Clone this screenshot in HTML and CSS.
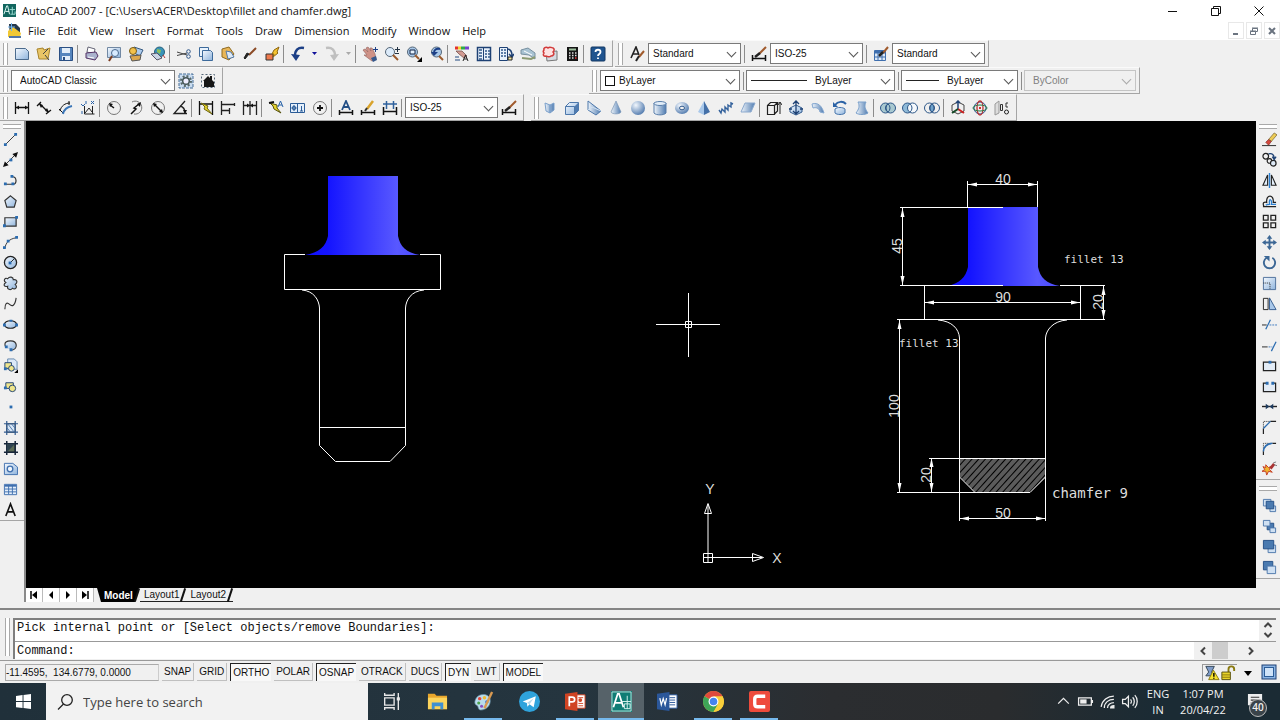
FILE: index.html
```html
<!DOCTYPE html>
<html lang="en">
<head>
<meta charset="utf-8">
<title>AutoCAD 2007 - [C:\Users\ACER\Desktop\fillet and chamfer.dwg]</title>
<link rel="stylesheet" href="styles.css">
</head>
<body>
<svg class="defs" aria-hidden="true">
  <defs>
    <linearGradient id="sky" x1="0" y1="0" x2="1" y2="1"><stop offset="0" stop-color="#f4f9ff"/><stop offset="1" stop-color="#8fb4dc"/></linearGradient>
    <linearGradient id="steel" x1="0" y1="0" x2="1" y2="0"><stop offset="0" stop-color="#f0f6fc"/><stop offset="1" stop-color="#4f7bb0"/></linearGradient>
    <radialGradient id="ball" cx=".35" cy=".3" r=".8"><stop offset="0" stop-color="#f2f7fd"/><stop offset="1" stop-color="#4571a8"/></radialGradient>
    <linearGradient id="shaft" x1="0" y1="0" x2="1" y2="0"><stop offset="0" stop-color="#1010ff"/><stop offset=".2" stop-color="#1414ff"/><stop offset=".8" stop-color="#5858ff"/><stop offset="1" stop-color="#4a4aff"/></linearGradient>
    <pattern id="hatch" width="5" height="5" patternUnits="userSpaceOnUse" patternTransform="rotate(42)"><path d="M1 0V5M3 0V5" stroke="#e4e4e4" stroke-width=".8"/></pattern>
  </defs>
</svg>

<header class="titlebar">
  <svg class="app-logo" viewBox="0 0 14 14"><rect width="14" height="14" fill="#12665f"/><path d="M1 11L4 2h1l2 9M2.500 8h4" stroke="#e6fffa" fill="none"/><path d="M7 6h6M10 3v8M8 11h5v-3" stroke="#9fe0d5" fill="none"/></svg>
  <h1>AutoCAD 2007 - [C:\Users\ACER\Desktop\fillet and chamfer.dwg]</h1>
  <div class="window-controls">
    <button aria-label="Minimize"><svg viewBox="0 0 12 12"><path d="M1 6.500h9"/></svg></button>
    <button aria-label="Restore"><svg viewBox="0 0 12 12"><path d="M1.500 3.500h7v7h-7zM3.500 3.500v-2h7v7h-2"/></svg></button>
    <button aria-label="Close"><svg viewBox="0 0 12 12"><path d="M1.500 1.500l9 9M10.500 1.500l-9 9"/></svg></button>
  </div>
</header>

<nav class="menubar">
  <svg class="doc-logo" viewBox="0 0 15 15"><path d="M2 1h7l4 4v8H3z" fill="#26384a"/><path d="M1 8l5-4 8 6-1 4H1z" fill="#f1c834"/><path d="M4.500 0v8M1 4h7" stroke="#6fb1ec"/><path d="M2 14h12" stroke="#5175a5" stroke-width="2"/></svg>
  <button>File</button><button>Edit</button><button>View</button><button>Insert</button><button>Format</button><button>Tools</button><button>Draw</button><button>Dimension</button><button>Modify</button><button>Window</button><button>Help</button>
  <div class="doc-controls">
    <button aria-label="Minimize drawing"><svg viewBox="0 0 10 10"><path d="M2 8h5" stroke-width="2"/></svg></button>
    <button aria-label="Restore drawing"><svg viewBox="0 0 10 10"><path d="M1.500 5.500h5v3h-5zM3.500 5V2.500h5v3h-2M1 5h6M3 2h6"/></svg></button>
    <button aria-label="Close drawing"><svg viewBox="0 0 10 10"><path d="M2 2l6 6M8 2l-6 6" stroke-width="2"/></svg></button>
  </div>
</nav>

<section class="docks">
  <div class="dock-row">
    <div class="toolbar">
      <i class="grip"></i>
      <button aria-label="New"><svg viewBox="0 0 16 16"><path d="M1.500 2.500h10l3 3v8h-13z" fill="url(#sky)" stroke="#4b6a8c"/></svg></button>
      <button aria-label="Open"><svg viewBox="0 0 16 16"><path d="M1 3l6-1 1 2 6-2-2 11H3z" fill="#e9c566" stroke="#a8842c"/><path d="M7 8l5-5M9 9l4 5" stroke="#444"/></svg></button>
      <button aria-label="Save"><svg viewBox="0 0 16 16"><path d="M1.500 1.500h13v13h-13z" fill="#5685bd" stroke="#2a4f83"/><path d="M4 2h8v5H4zM4 10h8v4H4z" fill="#e2edf8" stroke="none"/><path d="M6 11v3" stroke="#2a4f83" stroke-width="2"/></svg></button>
      <i class="sep"></i>
      <button aria-label="Plot"><svg viewBox="0 0 16 16"><path d="M4 1l7 2-1 5-7-2z" fill="#fff" stroke="#667"/><path d="M2 7l10-1 2 4-3 4-9-2z" fill="#aab2cd" stroke="#536"/><path d="M4 11l6 1" stroke="#fff"/></svg></button>
      <button aria-label="Plot Preview"><svg viewBox="0 0 16 16"><path d="M1.500 1.500h13v10h-13z" fill="url(#sky)" stroke="#7188a3"/><circle cx="9" cy="7" r="3.500" fill="#d8ebff" stroke="#4c6a8e"/><path d="M6 10l-3 5" stroke="#7b3c20" stroke-width="2"/></svg></button>
      <button aria-label="Publish"><svg viewBox="0 0 16 16"><path d="M6 1l9 3-3 6-8-4z" fill="#aecbec" stroke="#34587f"/><circle cx="5" cy="5" r="3.500" fill="#f2c14b" stroke="#795a12"/><path d="M2 10l11-1-1 5-8 1z" fill="#dca74d" stroke="#555"/></svg></button>
      <button aria-label="3D DWF"><svg viewBox="0 0 16 16"><circle cx="9.500" cy="6" r="5" fill="#3a93b8" stroke="#28607c"/><path d="M7 3l4 1-1 4-3-2z" fill="#8fc15a" stroke="none"/><path d="M1 8l6-1 5 5-5 2z" fill="#c9d4e4" stroke="#556"/><path d="M13 9l2 3" stroke="#b33"/></svg></button>
      <i class="sep"></i>
      <button aria-label="Cut"><svg viewBox="0 0 16 16"><path d="M1 6l10 3M1 9.500L11 7" stroke="#444"/><circle cx="12.500" cy="5.500" r="1.800" stroke="#31588a"/><circle cx="12.500" cy="10.500" r="1.800" stroke="#31588a"/></svg></button>
      <button aria-label="Copy"><svg viewBox="0 0 16 16"><path d="M1.500 1.500h9v9h-9z" fill="#e9f3fd" stroke="#3d6a9b"/><path d="M4.500 4.500h8l2 2v8h-10z" fill="url(#sky)" stroke="#3d6a9b"/></svg></button>
      <button aria-label="Paste"><svg viewBox="0 0 16 16"><path d="M2 3l7-2 5 7-5 6-7-3z" fill="#e8b657" stroke="#8f6a21"/><path d="M6 5l5 1 3 5-6 2z" fill="#dbe9f8" stroke="#5478a3"/></svg></button>
      <button aria-label="Match Properties"><svg viewBox="0 0 16 16"><path d="M14 2L7 9" stroke="#8b4a25" stroke-width="2"/><path d="M7 8L3 13l-1-1 3-5z" fill="#222" stroke="#222"/></svg></button>
      <button aria-label="Block Editor"><svg viewBox="0 0 16 16"><path d="M2 8h7v6H2z" fill="#ef7a4d" stroke="#333"/><path d="M8 8l2-4 5-3-2 5 1 1-5 4 1-3z" fill="#f5c431" stroke="#8d6510"/></svg></button>
      <i class="sep"></i>
      <button aria-label="Undo"><svg viewBox="0 0 16 16"><path d="M14 2C8 1 5 4 5 10" stroke="#1c3f86" stroke-width="2.500"/><path d="M1 8l9 1-4 6z" fill="#1c3f86" stroke="none"/></svg></button>
      <button class="drop" aria-label="Undo list"><svg viewBox="0 0 8 8"><path d="M1 2h5L3.500 5z" fill="#10109a" stroke="none"/></svg></button>
      <button aria-label="Redo"><svg viewBox="0 0 16 16"><path d="M2 2c6-1 9 2 9 8" stroke="#bfbfbf" stroke-width="2.500"/><path d="M15 8l-9 1 4 6z" fill="#bfbfbf" stroke="none"/></svg></button>
      <button class="drop" aria-label="Redo list"><svg viewBox="0 0 8 8"><path d="M1 2h5L3.500 5z" fill="#aaa" stroke="none"/></svg></button>
      <i class="sep"></i>
      <button aria-label="Pan"><svg viewBox="0 0 16 16"><path d="M1 4l2-1 3 3-2-4 2-1 3 4-1-3 2 0 3 6 1 5-4 2-4-3-4-3 3 0z" fill="#cf9287" stroke="#9b6a64" stroke-width=".7"/><path d="M9 12l5-2 1 4-4 2z" fill="#36598d" stroke="none"/><path d="M13.500 1v5M11 3.500h5" stroke="#1c3f86"/></svg></button>
      <button aria-label="Zoom Realtime"><svg viewBox="0 0 16 16"><circle cx="6" cy="6" r="4.500" fill="#dcebfa" stroke="#567"/><path d="M9 9l5 5" stroke="#9a5a2d" stroke-width="2"/><path d="M13.500 1v5M11 3.500h5M11 7.500h4" stroke="#234"/></svg></button>
      <button aria-label="Zoom Window"><svg viewBox="0 0 16 16"><circle cx="6.500" cy="6" r="5" fill="#a9c8e8" stroke="#567"/><path d="M4 4h5v4H4z" stroke="#124" fill="#e5f1fd"/><path d="M9 9l4 4" stroke="#9a5a2d" stroke-width="2"/><path d="M16 11v5h-5z" fill="#000" stroke="none"/></svg></button>
      <button aria-label="Zoom Previous"><svg viewBox="0 0 16 16"><circle cx="8.500" cy="6" r="5" fill="#a9c8e8" stroke="#567"/><path d="M12 3C8 2 6 4 6 7" stroke="#1c3f86" stroke-width="2"/><path d="M3 6h7l-4 4z" fill="#1c3f86" stroke="none"/><path d="M11 10l4 4" stroke="#9a5a2d" stroke-width="2"/></svg></button>
      <i class="sep"></i>
      <button aria-label="Properties"><svg viewBox="0 0 16 16"><path d="M1 2h3" stroke="#e4312b" stroke-width="3"/><path d="M4 2h3" stroke="#f3d131" stroke-width="3"/><path d="M7 2h4" stroke="#2fab47" stroke-width="3"/><path d="M11 2h4" stroke="#7442cf" stroke-width="3"/><path d="M2 5l6 0 5 5-3 2-5-4z" fill="#d29a91" stroke="#6b4541" stroke-width=".7"/><path d="M1 11h4M1 14h5" stroke="#234a80"/><path d="M9 15l2.500-6L14 15M10 13h3" stroke="#222"/></svg></button>
      <button aria-label="DesignCenter"><svg viewBox="0 0 16 16"><path d="M1.500 1.500h13v13h-13z" fill="#e8f1fb" stroke="#1e4174" stroke-width="1.500"/><path d="M7.500 2v12" stroke="#1e4174"/><path d="M3 4h3M3 7h3M3 10h3M3 13h3M9 5h2M12 5h2M9 8h2M12 8h2M9 11h2M12 11h2" stroke="#31588a" stroke-width="1.600"/></svg></button>
      <button aria-label="Tool Palettes"><svg viewBox="0 0 16 16"><path d="M1.500 1.500h8v13h-8z" fill="#e8f1fb" stroke="#1e4174"/><path d="M3 4h2M6 4h2M3 7h2M6 7h2M3 10h2M6 10h2" stroke="#31588a" stroke-width="1.500"/><path d="M9 3c4 0 5 3 5 7M11 8l3 3 2-3" stroke="#1e4174" stroke-width="1.500"/><path d="M10 11h4v3h-4z" fill="#f2e5a0"/></svg></button>
      <button aria-label="Sheet Set Manager"><svg viewBox="0 0 16 16"><path d="M1 4l7-2 7 5v6l-6-4-8-1z" fill="#a9c3d3" stroke="#7890a0"/><path d="M2 12l9 1 4-2" stroke="#8c9a72" stroke-width="2"/><path d="M4 5l8 4" stroke="#fff"/></svg></button>
      <button aria-label="Markup Set Manager"><svg viewBox="0 0 16 16"><path d="M4 6l11-1v9l-10 1z" fill="#d5dbe2" stroke="#777"/><path d="M2 4c-1-3 3-3 4-2 2-2 4 0 5 0 2 1 1 3 0 4 2 2 0 4-2 4-2 2-4 0-5 0-3 1-3-2-2-3-1-1-1-2 0-3z" fill="#fde2e2" stroke="#d23a3a" stroke-width="1.500"/></svg></button>
      <button aria-label="QuickCalc"><svg viewBox="0 0 16 16"><path d="M3 1h11v14H3z" fill="#151515" stroke="none"/><path d="M5 3.500h7" stroke="#9cbf9c" stroke-width="2"/><path d="M5 7h1.500M8 7h1.500M11 7h1.500M5 9.500h1.500M8 9.500h1.500M11 9.500h1.500M5 12h1.500M8 12h1.500" stroke="#ddd" stroke-width="1.500"/><path d="M11 12h1.500" stroke="#e33" stroke-width="1.500"/></svg></button>
      <i class="sep"></i>
      <button aria-label="Help"><svg viewBox="0 0 16 16"><rect x="1" y="1" width="14" height="14" rx="1" fill="#1f548f" stroke="#123763"/><path d="M5.500 6c0-3 5-3 5 0 0 2-2.500 2-2.500 4M8 11.500v1.500" stroke="#fff" stroke-width="1.800"/></svg></button>
    </div>
    <div class="toolbar">
      <i class="grip"></i>
      <button aria-label="Text Style"><svg viewBox="0 0 16 16"><path d="M2 12L7 1l3 8M4 8h5" stroke="#222" stroke-width="1.600"/><path d="M15 5l-5 6" stroke="#a05a2c" stroke-width="2"/><path d="M10 10l-3 5" stroke="#222" stroke-width="2"/></svg></button>
      <div class="combo w92"><select aria-label="Text style"><option>Standard</option></select></div>
      <i class="sep"></i>
      <button aria-label="Dimension Style"><svg viewBox="0 0 16 16"><path d="M1.500 9v6M14.500 9v6M2 12.500h12" stroke="#111" stroke-width="1.500"/><path d="M15 1L8 8" stroke="#a05a2c" stroke-width="2"/><path d="M9 7l-5 4" stroke="#222" stroke-width="2.500"/></svg></button>
      <div class="combo w92"><select aria-label="Dimension style"><option>ISO-25</option></select></div>
      <i class="sep"></i>
      <button aria-label="Table Style"><svg viewBox="0 0 16 16"><path d="M1.500 4.500h11v10h-11z" fill="#dce9f8" stroke="#3f6fae"/><path d="M2 6h10" stroke="#3f6fae" stroke-width="3"/><path d="M5 5v9M9 5v9M2 11h10" stroke="#3f6fae"/><path d="M15 1l-5 6" stroke="#a05a2c" stroke-width="2"/><path d="M10 6l-4 4" stroke="#222" stroke-width="2.500"/></svg></button>
      <div class="combo w92"><select aria-label="Table style"><option>Standard</option></select></div>
    </div>
  </div>

  <div class="dock-row">
    <div class="toolbar workspaces">
      <i class="grip"></i>
      <div class="combo w163"><select aria-label="Workspace"><option>AutoCAD Classic</option></select></div>
      <button aria-label="Workspace Settings"><svg viewBox="0 0 16 16"><path d="M1 1h14v14H1z" stroke="#456c96" stroke-dasharray="3 1" fill="#c9dcf0"/><circle cx="8" cy="8" r="5" stroke="#566" stroke-width="2" stroke-dasharray="2 1.900"/><circle cx="8" cy="8" r="3.300" fill="#eef" stroke="#455" stroke-width="1.500"/></svg></button>
      <button aria-label="My Workspace"><svg viewBox="0 0 16 16"><path d="M1.500 1.500h13v13h-13z" stroke="#567" stroke-dasharray="2 2"/><path d="M3 8l5-5 2 2V3h2v4l2 2v5H4V8z" fill="#161616" stroke="none"/></svg></button>
    </div>
    <div class="toolbar properties">
      <i class="grip"></i>
      <div class="combo w140"><i class="swatch"></i><select aria-label="Color"><option>ByLayer</option></select></div>
      <i class="sep"></i>
      <div class="combo w149"><i class="line w56"></i><select aria-label="Linetype"><option>ByLayer</option></select></div>
      <i class="sep"></i>
      <div class="combo w117"><i class="line w33"></i><select aria-label="Lineweight"><option>ByLayer</option></select></div>
      <i class="sep"></i>
      <div class="combo w112 off"><select aria-label="Plot style" disabled><option>ByColor</option></select></div>
    </div>
  </div>

  <div class="dock-row">
    <div class="toolbar">
      <i class="grip"></i>
      <button aria-label="Linear"><svg viewBox="0 0 16 16"><path d="M1.500 2v12M14.500 2v12M2 7.500h12" stroke="#111" stroke-width="1.300"/><path d="M2 7.500l3-2v4zM14 7.500l-3-2v4z" fill="#111" stroke="none"/></svg></button>
      <button aria-label="Aligned"><svg viewBox="0 0 16 16"><path d="M1 6l4-4M10 14l5-4M4 4l8 8" stroke="#111" stroke-width="1.300"/><path d="M3 4l4 1-2 3zM13 12l-4-1 2-3z" fill="#111" stroke="none"/></svg></button>
      <button aria-label="Arc Length"><svg viewBox="0 0 16 16"><path d="M2 11C3 6 7 3 12 3M1 9l4 4M11 1v4" stroke="#111"/><path d="M5 14c1-5 4-7 9-8" stroke="#3b76b8" stroke-width="2"/></svg></button>
      <button aria-label="Ordinate"><svg viewBox="0 0 16 16"><path d="M4.500 6v8h10M5 13l4-5 3 4" stroke="#222"/><path d="M12.500 6v8" stroke="#222"/><path d="M1 4l2 2 2-2M11 1l3 3M14 1l-3 3M2 11v3M6 1v3" stroke="#2962a8"/></svg></button>
      <i class="sep"></i>
      <button aria-label="Radius"><svg viewBox="0 0 16 16"><circle cx="8" cy="8" r="6.500" stroke="#777"/><path d="M8 8L4 5" stroke="#111" stroke-width="1.500"/><path d="M3 3l4 1-3 3z" fill="#111" stroke="none"/></svg></button>
      <button aria-label="Jogged"><svg viewBox="0 0 16 16"><path d="M4 2a6.500 6.500 0 1 1 2 12" stroke="#777"/><path d="M3 14l5-5-2-1 5-4" stroke="#111" stroke-width="1.500"/><path d="M13 2l-1 5-3-3z" fill="#111" stroke="none"/></svg></button>
      <button aria-label="Diameter"><svg viewBox="0 0 16 16"><circle cx="8" cy="8" r="6.500" stroke="#777"/><path d="M4 4l8 8" stroke="#111" stroke-width="1.500"/><path d="M3 3l4 1-3 3zM13 13l-4-1 3-3z" fill="#111" stroke="none"/></svg></button>
      <button aria-label="Angular"><svg viewBox="0 0 16 16"><path d="M13 1L2 13.500h13M8 6c4 1 5 4 5 7" stroke="#222" stroke-width="1.300"/><path d="M13 14l-2-4h4z" fill="#111" stroke="none"/></svg></button>
      <i class="sep"></i>
      <button aria-label="Quick Dimension"><svg viewBox="0 0 16 16"><path d="M1.500 1v14M14.500 1v14M2 4h12" stroke="#111" stroke-width="1.300"/><path d="M3 3l7 3-1 2 5 6-8-5 1-2z" fill="#e7d62f" stroke="#6d6410"/></svg></button>
      <button aria-label="Baseline"><svg viewBox="0 0 16 16"><path d="M1.500 1v14M2 4.500h13M2 10.500h7M14.500 3v3M9.500 8v6" stroke="#222" stroke-width="1.300"/></svg></button>
      <button aria-label="Continue"><svg viewBox="0 0 16 16"><path d="M1.500 1v14M8 1v14M14.500 1v14M2 5.500h12" stroke="#222" stroke-width="1.300"/><path d="M8 5.500l-3-2v4zM8 5.500l3-2v4z" fill="#111" stroke="none"/></svg></button>
      <i class="sep"></i>
      <button aria-label="Quick Leader"><svg viewBox="0 0 16 16"><path d="M2 3l7 2 0 3 4 5-7-4-1-3z" fill="#e7d62f" stroke="#55500f"/><path d="M1 3l5-1" stroke="#111" stroke-width="2"/><path d="M10 7l2.500-6L15 7M11 5h3" stroke="#2962a8"/></svg></button>
      <button aria-label="Tolerance"><svg viewBox="0 0 16 16"><path d="M.5 3.500h14v9H.5z" fill="#e4effb" stroke="#2b5c97"/><path d="M7.500 4v8" stroke="#2b5c97"/><circle cx="4" cy="8" r="1.800" stroke="#2b5c97"/><path d="M1.500 8h5M4 5v6M11.500 6v5M10 11h3" stroke="#2b5c97"/></svg></button>
      <button aria-label="Center Mark"><svg viewBox="0 0 16 16"><circle cx="8" cy="8" r="6.500" stroke="#777"/><path d="M8 5v6M5 8h6" stroke="#111" stroke-width="1.800"/></svg></button>
      <i class="sep"></i>
      <button aria-label="Dimension Edit"><svg viewBox="0 0 16 16"><path d="M1.500 10v5M14.500 10v5M2 12.500h12" stroke="#111" stroke-width="1.500"/><path d="M4 10l4-9 4 9M5.500 7h5" stroke="#234f86" stroke-width="1.800"/></svg></button>
      <button aria-label="Dimension Text Edit"><svg viewBox="0 0 16 16"><path d="M1.500 10v5M14.500 10v5M2 12.500h12" stroke="#111" stroke-width="1.500"/><path d="M13 1L7 9" stroke="#d9a32c" stroke-width="2.500"/><path d="M7 8l-2 3" stroke="#333" stroke-width="2"/></svg></button>
      <button aria-label="Dimension Update"><svg viewBox="0 0 16 16"><path d="M1.500 7v8M14.500 7v8M2 11.500h12" stroke="#111" stroke-width="1.500"/><path d="M4.500 1v8M11.500 1v8M1 4h14" stroke="#2f619d" stroke-width="1.500"/></svg></button>
      <i class="sep"></i>
      <div class="combo w92"><select aria-label="Dim style control"><option>ISO-25</option></select></div>
      <button aria-label="Dimension Style"><svg viewBox="0 0 16 16"><path d="M1.500 9v6M14.500 9v6M2 12.500h12" stroke="#111" stroke-width="1.500"/><path d="M15 1L8 8" stroke="#a05a2c" stroke-width="2"/><path d="M9 7l-5 4" stroke="#222" stroke-width="2.500"/></svg></button>
    </div>
    <div class="toolbar modeling">
      <i class="grip"></i>
      <button aria-label="Polysolid"><svg viewBox="0 0 16 16"><path d="M3 3l5 2v8l-4-2zM8 5l4-2v7l-4 3z" fill="url(#steel)" stroke="#7ba0cb"/></svg></button>
      <button aria-label="Box"><svg viewBox="0 0 16 16"><path d="M1.500 6.500l4-4h9v8l-4 4h-9z" fill="url(#sky)" stroke="#4d78ab"/><path d="M10.500 6.500l4-4v8l-4 4z" fill="#4f7bb0" stroke="none"/><path d="M1.500 6.500h9v8" stroke="#4d78ab"/></svg></button>
      <button aria-label="Wedge"><svg viewBox="0 0 16 16"><path d="M2 1v9l8 5 5-4z" fill="url(#steel)" stroke="#4d78ab"/><path d="M2 10l4-3 9 4" stroke="#cfe0f2"/></svg></button>
      <button aria-label="Cone"><svg viewBox="0 0 16 16"><path d="M8 1l5 11c-1 2.500-9 2.500-10 0z" fill="url(#steel)" stroke="#7d98b8" stroke-width=".7"/></svg></button>
      <button aria-label="Sphere"><svg viewBox="0 0 16 16"><circle cx="8" cy="8" r="7" fill="url(#ball)" stroke="none"/></svg></button>
      <button aria-label="Cylinder"><svg viewBox="0 0 16 16"><path d="M2 3v10c2 2.500 10 2.500 12 0V3z" fill="url(#steel)" stroke="#5a7fab"/><ellipse cx="8" cy="3.500" rx="6" ry="2" fill="#e2edf8" stroke="#5a7fab"/></svg></button>
      <button aria-label="Torus"><svg viewBox="0 0 16 16"><ellipse cx="8" cy="8" rx="7" ry="6" fill="url(#ball)" stroke="none"/><ellipse cx="8" cy="8" rx="2.500" ry="1.800" fill="#f0f0f0" stroke="#345c8f"/></svg></button>
      <button aria-label="Pyramid"><svg viewBox="0 0 16 16"><path d="M8 1L2 12l6 3z" fill="#a9c8ea" stroke="none"/><path d="M8 1l6 11-6 3z" fill="#4470a8" stroke="none"/></svg></button>
      <button aria-label="Helix"><svg viewBox="0 0 16 16"><path d="M1 10l2 3 1-4 3 3V7l3 3V5l3 2 0-4 2 1" stroke="#34629c" stroke-width="1.400"/></svg></button>
      <button aria-label="Planar Surface"><svg viewBox="0 0 16 16"><path d="M5 3h10l-4 9H1z" fill="url(#steel)" stroke="#8ba9ce"/></svg></button>
      <i class="sep"></i>
      <button aria-label="Extrude"><svg viewBox="0 0 16 16"><path d="M1.500 5.500h7v9h-7zM1.500 5.500l3-3h7l-3 3M11.500 3v8l-3 3" stroke="#222" stroke-width="1.200"/><path d="M14 14V3M12 5l2-3 2 3" stroke="#222"/></svg></button>
      <button aria-label="Presspull"><svg viewBox="0 0 16 16"><path d="M2 8l6-3 6 3v4l-6 3-6-3z" fill="url(#sky)" stroke="#345c8f"/><path d="M8 1v12M5 4l3-3 3 3M1 9h3M12 9h3M5 11l3 3 3-3" stroke="#1e4174" stroke-width="1.300"/></svg></button>
      <button aria-label="Sweep"><svg viewBox="0 0 16 16"><path d="M2 4c6-2 10 2 12 9l-4-1C9 8 6 7 3 8z" fill="url(#steel)" stroke="#84a7d0"/></svg></button>
      <button aria-label="Revolve"><svg viewBox="0 0 16 16"><path d="M3 9c2-2 8-2 10 0v4c-2 2-8 2-10 0z" fill="url(#sky)" stroke="#4674ab"/><path d="M3 5c3-4 8-4 11-1" stroke="#2b62a5" stroke-width="2"/><path d="M1 2v5h5z" fill="#2b62a5" stroke="none"/></svg></button>
      <button aria-label="Loft"><svg viewBox="0 0 16 16"><path d="M4 2h8c-2 4-1 7 2 11-3 2-9 2-12 0 3-4 4-7 2-11z" fill="url(#steel)" stroke="#7aa0cb"/></svg></button>
      <i class="sep"></i>
      <button aria-label="Union"><svg viewBox="0 0 16 16"><circle cx="5.500" cy="8" r="5" fill="#a8c8d0" stroke="#2d5788"/><circle cx="10.500" cy="8" r="5" fill="#a8c8d0" stroke="#2d5788"/><path d="M8 4a5 5 0 0 0 0 8a5 5 0 0 0 0-8" stroke="#2d5788"/></svg></button>
      <button aria-label="Subtract"><svg viewBox="0 0 16 16"><circle cx="5.500" cy="8" r="5" fill="#8fbad8" stroke="#2d5788"/><circle cx="10.500" cy="8" r="5" fill="#f4f8fc" stroke="#2d5788"/><path d="M8 4a5 5 0 0 1 0 8" stroke="#2d5788"/></svg></button>
      <button aria-label="Intersect"><svg viewBox="0 0 16 16"><circle cx="5.500" cy="8" r="5" stroke="#2d5788"/><circle cx="10.500" cy="8" r="5" stroke="#2d5788"/><path d="M8 4a5 5 0 0 0 0 8a5 5 0 0 0 0-8" fill="#6fa3cc" stroke="#2d5788"/></svg></button>
      <i class="sep"></i>
      <button aria-label="3D Move"><svg viewBox="0 0 16 16"><path d="M8 2l6 3v6l-6 3-6-3V5z" stroke="#444"/><path d="M8 9V1M6 3l2-2 2 2" stroke="#1e4174" stroke-width="1.500"/><path d="M8 9l6 4" stroke="#c22" stroke-width="2"/><path d="M8 9l-6 4" stroke="#164a28" stroke-width="2"/></svg></button>
      <button aria-label="3D Rotate"><svg viewBox="0 0 16 16"><circle cx="8" cy="8" r="6" stroke="#2a4f90"/><ellipse cx="8" cy="8" rx="3" ry="7" stroke="#b33" stroke-width="1.300"/><ellipse cx="8" cy="8" rx="7" ry="3" stroke="#257a45"/><path d="M7 7h2v2H7z" fill="#c33" stroke="none"/></svg></button>
      <button aria-label="3D Align"><svg viewBox="0 0 16 16"><path d="M1 4l4-3v12l-4 2z" fill="#ddd" stroke="#999"/><path d="M6.500 4.500h2v6h-2zM12 3v4h2M14 3h-2" stroke="#333"/><circle cx="12.500" cy="12" r="2" stroke="#222"/></svg></button>
    </div>
  </div>
</section>

<main class="workspace">
  <aside class="side">
    <div class="palette draw">
      <i class="hgrip"></i>
      <button aria-label="Line"><svg viewBox="0 0 16 16"><path d="M2 14L14 2" stroke="#333"/><path d="M1 12h3v3H1zM12 1h3v3h-3z" fill="#2b6cb0" stroke="none"/></svg></button>
      <button aria-label="Construction Line"><svg viewBox="0 0 16 16"><path d="M2 14L14 2" stroke="#333"/><path d="M0 16l2-6 4 4zM16 0l-2 6-4-4z" fill="#111" stroke="none"/><path d="M7 7h3v3H7z" fill="#2b6cb0" stroke="none"/></svg></button>
      <button aria-label="Polyline"><svg viewBox="0 0 16 16"><path d="M2 12h9c4 0 4-8-1-8" stroke="#333" stroke-width="1.300"/><path d="M1 10h3v3H1zM9 10h3v3H9zM8 2h3v3H8z" fill="#2b6cb0" stroke="none"/></svg></button>
      <button aria-label="Polygon"><svg viewBox="0 0 16 16"><path d="M8 2l6 5-2 7H4L2 7z" fill="url(#sky)" stroke="#333" stroke-width="1.300"/></svg></button>
      <button aria-label="Rectangle"><svg viewBox="0 0 16 16"><path d="M2 4h12v9H2z" fill="url(#sky)" stroke="#333" stroke-width="1.300"/><path d="M0 11h3v3H0zM13 2h3v3h-3z" fill="#2b6cb0" stroke="none"/></svg></button>
      <button aria-label="Arc"><svg viewBox="0 0 16 16"><path d="M2 14C3 8 7 4 14 3" stroke="#333"/><path d="M0 12h3v3H0zM4 5h3v3H4zM13 1h3v3h-3z" fill="#2b6cb0" stroke="none"/></svg></button>
      <button aria-label="Circle"><svg viewBox="0 0 16 16"><circle cx="8" cy="8" r="6.500" fill="url(#sky)" stroke="#222" stroke-width="1.400"/><path d="M8 8l4-4" stroke="#222"/><path d="M6 7h3v3H6z" fill="#2b6cb0" stroke="none"/></svg></button>
      <button aria-label="Revision Cloud"><svg viewBox="0 0 16 16"><path d="M3 7C0 5 2 1 5 3c2-3 6-2 6 1 4-1 5 3 2 5 3 3 0 6-3 4-2 3-6 1-5-2-4 1-5-2-2-4z" fill="url(#sky)" stroke="#333" stroke-width="1.200"/></svg></button>
      <button aria-label="Spline"><svg viewBox="0 0 16 16"><path d="M2 14c0-6 2-8 5-5s6 1 7-7" stroke="#333" stroke-width="1.200"/></svg></button>
      <button aria-label="Ellipse"><svg viewBox="0 0 16 16"><ellipse cx="8" cy="8" rx="6.500" ry="4" fill="url(#sky)" stroke="#222" stroke-width="1.300"/><path d="M0 7h3v3H0zM13 7h3v3h-3zM7 3h3v2H7z" fill="#2b6cb0" stroke="none"/></svg></button>
      <button aria-label="Ellipse Arc"><svg viewBox="0 0 16 16"><path d="M3 10C0 4 5 3 8 3c8 0 8 9 1 10" fill="url(#sky)" stroke="#333" stroke-width="1.200"/><path d="M2 8h3v3H2zM7 11h3v3H7z" fill="#2b6cb0" stroke="none"/></svg></button>
      <button aria-label="Insert Block"><svg viewBox="0 0 16 16"><path d="M5 1h7l3 3v8H5z" fill="#dbe9f8" stroke="#6286ad"/><path d="M2 5h7v6H2z" fill="#f0e68c" stroke="#1e4174"/><circle cx="9" cy="11" r="3" fill="#f0e68c" stroke="#1e4174"/><path d="M1 10h3v3H1z" fill="#2b6cb0" stroke="none"/><path d="M16 12v4h-4z" fill="#000" stroke="none"/></svg></button>
      <button aria-label="Make Block"><svg viewBox="0 0 16 16"><path d="M3 4h8v6H3z" fill="#f0e68c" stroke="#1e4174"/><circle cx="10" cy="10" r="3.500" fill="#f0e68c" stroke="#1e4174"/><path d="M1 8h3v3H1z" fill="#2b6cb0" stroke="none"/></svg></button>
      <button aria-label="Point"><svg viewBox="0 0 16 16"><path d="M7 7h3v3H7z" fill="#2b6cb0" stroke="none"/></svg></button>
      <button aria-label="Hatch"><svg viewBox="0 0 16 16"><path d="M4 4h9v9H4z" fill="#d7e6f6"/><path d="M1 4h15M1 13h15M4 1v15M13 1v15" stroke="#345c8f" stroke-width="1.300"/><path d="M4 8l4 5M5 4l7 9M9 4l4 5" stroke="#4d78ab"/></svg></button>
      <button aria-label="Gradient"><svg viewBox="0 0 16 16"><path d="M4 4h9v9H4z" fill="#5c6c55"/><path d="M1 4h15M1 13h15M4 1v15M13 1v15" stroke="#17263a" stroke-width="1.600"/><path d="M4 4l9 0-9 9z" fill="#2e4350" stroke="none"/></svg></button>
      <button aria-label="Region"><svg viewBox="0 0 16 16"><path d="M1.500 2.500h9l5 4v8h-14z" fill="url(#sky)" stroke="#3f6fae"/><circle cx="7.500" cy="8.500" r="3" fill="#f0f6fc" stroke="#3f6fae" stroke-width="1.400"/></svg></button>
      <button aria-label="Table"><svg viewBox="0 0 16 16"><path d="M1.500 2.500h13v11h-13z" fill="#e4effb" stroke="#3f6fae"/><path d="M2 4h12" stroke="#3f6fae" stroke-width="2"/><path d="M6 3v10M10 3v10M2 7.500h12M2 10.500h12" stroke="#3f6fae"/></svg></button>
      <button aria-label="Multiline Text"><svg viewBox="0 0 16 16"><path d="M3 15L8 2l5 13M5 10.500h6" stroke="#111" stroke-width="1.700"/></svg></button>
    </div>
  </aside>

  <section class="drawing">
    <svg class="canvas" viewBox="26 121 1230 467" role="img" aria-label="Drawing area">
      <g class="geo">
        <path d="M328 176H398V236C400 246 406 253 420 255H305C319 253 326 246 328 236z" fill="url(#shaft)" stroke="none"/>
        <path d="M305 254.500H284.500V289.500H440.500V254.500H420"/>
        <path d="M302 290C314 291 319 300 319.500 308V445.500L335.500 461.500H390L405.500 445.500V308C406 300 411 291 424 290M319.500 427.500H405.500"/>
        <path d="M656 324.500H720M688.500 293V357M685.500 321.500h6v6h-6z"/>
        <path d="M703.500 553.500h9v9h-9zM703.500 557.500H752.500M708 562V513.500M704.500 513.500h7L708 503.500zM752.500 553.500v8L763.500 557.500zM708 513V504M752 557.500h10"/>

        <path d="M968 207H1038V267C1040 277 1046 284 1060 286H947C959 284 966 277 968 267z" fill="url(#shaft)" stroke="none"/>
        <path d="M900 207.500H1003M900 285.500H1003M1060 285.500H1105M924.500 285.500V319.500M1080.500 285.500V319.500M897 319.500H1105M902.500 208V285M1103.500 286V319M925 302.500H1080M967.500 181V207M1037.500 181V207M968 184.500H1037"/>
        <path d="M938 320C952 321 959 329 959.500 338V521M1067 320C1053 321 1046 330 1045.500 338V521M899.500 320V492M897 492.500H1030L1045.500 477M959.500 477L975 492.500M929 458.500H1046M931.500 458V492M960 518.500H1046"/>
        <path d="M960 459H1046V477L1030 492H975L960 477z" fill="url(#hatch)" stroke="none"/>
      </g>
      <g class="arrows">
        <path d="M968 184.500l9-2v4zM1037 184.500l-9-2v4zM925 302.500l9-2v4zM1080 302.500l-9-2v4zM960 518.500l9-2v4zM1045 518.500l-9-2v4z"/>
        <path d="M902.500 208l-2 9h4zM902.500 285l-2-9h4zM1103.500 286l-2 9h4zM1103.500 319l-2-9h4zM899.500 320l-2 9h4zM899.500 492l-2-9h4zM931.500 458l-2 9h4zM931.500 492l-2-9h4z"/>
      </g>
      <g class="dims">
        <text x="1003" y="184">40</text>
        <text x="1003" y="302">90</text>
        <text x="1003" y="518">50</text>
        <text transform="translate(902 246) rotate(-90)">45</text>
        <text transform="translate(1103 302) rotate(-90)">20</text>
        <text transform="translate(899 406) rotate(-90)">100</text>
        <text transform="translate(931 475) rotate(-90)">20</text>
        <text x="710" y="494">Y</text>
        <text x="777" y="563">X</text>
      </g>
      <g class="notes">
        <text x="1064" y="263">fillet 13</text>
        <text x="899" y="347">fillet 13</text>
        <text class="large" x="1052" y="498">chamfer 9</text>
      </g>
    </svg>
    <div class="tabs">
      <div class="tab-nav">
        <button aria-label="First tab"><svg viewBox="0 0 10 10"><path d="M2 1v8" stroke="#000" stroke-width="1.500"/><path d="M8 1v8L3 5z"/></svg></button>
        <button aria-label="Previous tab"><svg viewBox="0 0 10 10"><path d="M7 1v8L3 5z"/></svg></button>
        <button aria-label="Next tab"><svg viewBox="0 0 10 10"><path d="M3 1v8l4-4z"/></svg></button>
        <button aria-label="Last tab"><svg viewBox="0 0 10 10"><path d="M8 1v8" stroke="#000" stroke-width="1.500"/><path d="M2 1v8l5-4z"/></svg></button>
      </div>
      <button class="tab active">Model</button>
      <button class="tab">Layout1</button>
      <button class="tab">Layout2</button>
    </div>
  </section>

  <aside class="side right">
    <div class="palette modify">
      <i class="hgrip"></i>
      <button aria-label="Erase"><svg viewBox="0 0 16 16"><path d="M0 14.500h15" stroke="#222"/><path d="M7 8l6-7 3 2-6 7z" fill="#eccb55" stroke="#6b5a2b" stroke-width=".7"/><path d="M4 11l3-3 3 2-3 4z" fill="#d4483d" stroke="#7b2c26" stroke-width=".7"/></svg></button>
      <button aria-label="Copy Object"><svg viewBox="0 0 16 16"><circle cx="4" cy="4.500" r="3" stroke="#222" stroke-width="1.300"/><circle cx="8" cy="9.500" r="2.500" stroke="#222" stroke-width="1.200"/><circle cx="12" cy="12" r="3" stroke="#222" stroke-width="1.300" fill="#dde9f6"/><path d="M7 2c4-1 6 1 6 5M11 5l2 3 2-3" stroke="#1e4174" stroke-width="1.400"/></svg></button>
      <button aria-label="Mirror"><svg viewBox="0 0 16 16"><path d="M6 2v11H1zM10 2v11h5z" stroke="#222" stroke-width="1.200" fill="#e4effb"/><path d="M8 0v16" stroke="#2b7fd0" stroke-width="1.500"/></svg></button>
      <button aria-label="Offset"><svg viewBox="0 0 16 16"><path d="M1 13.500h14M2 13C0 9 3 8 5 9 4 0 13 0 12 9h3" stroke="#222" stroke-width="1.300"/><path d="M4 12c1-1 4-1 4-1C7 4 11 5 10 11h5" stroke="#2b7fd0" stroke-width="1.300"/></svg></button>
      <button aria-label="Array"><svg viewBox="0 0 16 16"><path d="M1.500 1.500h5v5h-5zM9.500 1.500h5v5h-5zM1.500 9.500h5v5h-5zM9.500 9.500h5v5h-5z" stroke="#222" stroke-width="1.400"/></svg></button>
      <button aria-label="Move"><svg viewBox="0 0 16 16"><path d="M8 2v12M2 8h12" stroke="#3c6795" stroke-width="2"/><path d="M8 0l3 4H5zM8 16l3-4H5zM0 8l4-3v6zM16 8l-4-3v6z" fill="#3c6795" stroke="none"/></svg></button>
      <button aria-label="Rotate"><svg viewBox="0 0 16 16"><path d="M5 3a6 6 0 1 0 6 0" stroke="#3c6795" stroke-width="2"/><path d="M2 1h6v6z" fill="#3c6795" stroke="none"/></svg></button>
      <button aria-label="Scale"><svg viewBox="0 0 16 16"><path d="M1.500 1.500h13v13h-13z" fill="url(#sky)" stroke="#4d6f9b"/><path d="M1.500 7.500h7v7" stroke="#222" stroke-dasharray="1 1"/></svg></button>
      <button aria-label="Stretch"><svg viewBox="0 0 16 16"><path d="M1.500 2.500h5v12h-5z" stroke="#222"/><path d="M8 2l7 12.500H8z" fill="#a9c8ea" stroke="#345c8f"/></svg></button>
      <button aria-label="Trim"><svg viewBox="0 0 16 16"><path d="M0 8.500h5" stroke="#222"/><path d="M8 8.500h8" stroke="#3c78be" stroke-dasharray="2 1"/><path d="M4 13L9 3" stroke="#2b6cb0" stroke-width="1.300"/></svg></button>
      <button aria-label="Extend"><svg viewBox="0 0 16 16"><path d="M0 9.500h6" stroke="#222"/><path d="M7 9.500h4" stroke="#3c78be" stroke-dasharray="2 1"/><path d="M10 14l5-10" stroke="#2b6cb0" stroke-width="1.300"/></svg></button>
      <button aria-label="Break at Point"><svg viewBox="0 0 16 16"><path d="M1.500 4.500h13v9h-13z" fill="#e3ecf6" stroke="#222" stroke-width="1.300"/><path d="M7 3h3v3H7z" fill="#2b6cb0" stroke="none"/></svg></button>
      <button aria-label="Break"><svg viewBox="0 0 16 16"><path d="M5 4.500H1.500v9h13v-9H11" fill="#e3ecf6" stroke="#222" stroke-width="1.300"/><path d="M4 3h3v3H4zM10 3h3v3h-3z" fill="#2b6cb0" stroke="none"/></svg></button>
      <button aria-label="Join"><svg viewBox="0 0 16 16"><path d="M0 8h16" stroke="#222" stroke-width="1.500"/><path d="M8 8L4 5v6zM8 8l4-3v6z" fill="#1e3b5e" stroke="none"/></svg></button>
      <button aria-label="Chamfer"><svg viewBox="0 0 16 16"><path d="M1.500 15V9M9 1.500h6" stroke="#222" stroke-width="1.300"/><path d="M1.500 9V1.500H9" stroke="#222" stroke-dasharray="1 1"/><path d="M1.500 9L9 1.500" stroke="#2b6cb0" stroke-width="1.400"/></svg></button>
      <button aria-label="Fillet"><svg viewBox="0 0 16 16"><path d="M1.500 15v-4M11 2.500h4" stroke="#222" stroke-width="1.300"/><path d="M1.500 11V2.500H11" stroke="#222" stroke-dasharray="1 1"/><path d="M1.500 11C2 6 5 3 11 2.500" stroke="#2b6cb0" stroke-width="1.600"/></svg></button>
      <button aria-label="Explode"><svg viewBox="0 0 16 16"><path d="M1 6l3 1 0-3 3 3 2-1-1 3 3 3-4-1-2 4-1-4-4 0 3-2z" fill="#f2b52f" stroke="#c23b22"/><path d="M9 8l4-5" stroke="#a33" stroke-width="3"/><path d="M12 2l3-1M13 4l3 1" stroke="#777"/></svg></button>
    </div>
    <div class="palette order">
      <i class="hgrip"></i>
      <button aria-label="Bring to Front"><svg viewBox="0 0 16 16"><path d="M1.500 1.500h8v7h-8zM8.500 8.500h6v6h-6z" fill="#cfe0f2" stroke="#4d78ab"/><path d="M4.500 3.500h8v8h-8z" fill="#4a7ab0" stroke="#234f86"/></svg></button>
      <button aria-label="Send to Back"><svg viewBox="0 0 16 16"><path d="M5.500 4.500h7v7h-7z" fill="#4a7ab0" stroke="#234f86"/><path d="M1.500 1.500h7v6h-7zM8.500 9.500h6v5h-6z" fill="#cfe0f2" stroke="#4d78ab"/></svg></button>
      <button aria-label="Bring Above"><svg viewBox="0 0 16 16"><path d="M6.500 6.500h8v8h-8z" fill="#cfe0f2" stroke="#4d78ab"/><path d="M1.500 1.500h11v9h-11z" fill="#4a7ab0" stroke="#234f86"/></svg></button>
      <button aria-label="Send Under"><svg viewBox="0 0 16 16"><path d="M1.500 1.500h10v9h-10z" fill="#4a7ab0" stroke="#234f86"/><path d="M5.500 6.500h9v8h-9z" fill="#cfe0f2" stroke="#4d78ab"/></svg></button>
    </div>
  </aside>
</main>

<section class="command">
  <i class="grip"></i>
  <div class="console">
    <div class="history">
      <p>Pick internal point or [Select objects/remove Boundaries]:</p>
      <div class="vscroll">
        <button aria-label="Scroll up"><svg viewBox="0 0 10 8"><path d="M1.500 6L5 2.500 8.500 6"/></svg></button>
        <button aria-label="Scroll down"><svg viewBox="0 0 10 8"><path d="M1.500 2L5 5.500 8.500 2"/></svg></button>
      </div>
    </div>
    <div class="prompt">
      <label for="cmd">Command:</label>
      <input id="cmd" type="text">
      <div class="hscroll">
        <button aria-label="Scroll left"><svg viewBox="0 0 8 10"><path d="M6 1.500L2.500 5 6 8.500"/></svg></button>
        <i class="thumb"></i>
        <button aria-label="Scroll right"><svg viewBox="0 0 8 10"><path d="M2 1.500L5.500 5 2 8.500"/></svg></button>
      </div>
    </div>
  </div>
</section>

<footer class="status">
  <output class="coords">-11.4595,&nbsp; 134.6779, 0.0000</output>
  <button>SNAP</button><button>GRID</button><button class="on">ORTHO</button><button>POLAR</button><button class="on">OSNAP</button><button>OTRACK</button><button>DUCS</button><button class="on">DYN</button><button>LWT</button><button class="on">MODEL</button>
  <div class="status-tray">
    <div class="notify">
      <svg viewBox="0 0 18 16"><path d="M3 1h9L9 7l3 4H3l3-4z" fill="#7f9cc8" stroke="#345"/><path d="M11 5l6 10H6z" fill="#f7e22c" stroke="#8a7a10"/><path d="M11.500 8v4M11.500 13v1" stroke="#000" stroke-width="1.500"/></svg>
      <svg viewBox="0 0 18 16"><path d="M9 8V4c0-4 6-4 6 0v2" stroke="#8a7a10" stroke-width="2" fill="none"/><path d="M2 7h9v8H2z" fill="#e9d32a" stroke="#55500f"/><path d="M2 10h9M2 12.500h9" stroke="#8a7a10"/></svg>
    </div>
    <button class="plain" aria-label="Status bar menu"><svg viewBox="0 0 10 10"><path d="M1 4h8L5 9z" fill="#000"/></svg></button>
    <button class="plain" aria-label="Clean screen"><svg viewBox="0 0 16 16"><rect x="1" y="1" width="14" height="14" fill="#8ab4e4" stroke="#1e4174"/><rect x="3.500" y="3.500" width="9" height="9" fill="#cfe3f8" stroke="#2b5c97"/></svg></button>
  </div>
</footer>

<div class="taskbar">
  <button class="start" aria-label="Start"><svg viewBox="0 0 16 16"><path d="M0 2l7-1v6.500H0zM8 1l8-1v7.500H8zM0 8.500h7V15l-7-1zM8 8.500h8V16l-8-1z" fill="#fff"/></svg></button>
  <label class="search"><svg viewBox="0 0 18 18"><circle cx="11" cy="7" r="5.300"/><path d="M7.500 11L2 16.500"/></svg><input type="text" placeholder="Type here to search" aria-label="Search"></label>
  <div class="apps">
    <button aria-label="Task View"><svg viewBox="0 0 20 20" fill="none" stroke="#e8e8e8" stroke-width="1.300"><path d="M3.500 6.500h9v7h-9zM3.500 2v2h9V2M3.500 18v-2h9v2M16.500 2v16"/><path d="M15 6h3v3h-3z" fill="#e8e8e8" stroke="none"/></svg></button>
    <button aria-label="File Explorer"><svg viewBox="0 0 22 20"><path d="M1 2h7l2 2h11v14H1z" fill="#e8a62c"/><path d="M1 6h20v12H1z" fill="#fbd45c"/><path d="M5 18v-7h12v7h-3v-3H8v3z" fill="#3f90d2"/></svg></button>
    <button class="open" aria-label="Paint"><svg viewBox="0 0 22 22"><path d="M3 8c3-6 14-6 15 1 1 7-5 11-10 11-3 0-2-4-4-5s-3-3-1-7z" fill="#b9dcee" stroke="#668ba0" stroke-width=".7"/><circle cx="7" cy="8" r="1.800" fill="#e2483d"/><circle cx="12" cy="7" r="1.800" fill="#f2bb30"/><circle cx="6" cy="12.500" r="1.600" fill="#4ba24b"/><circle cx="14.500" cy="11.500" r="1.800" fill="#3c6fd1"/><circle cx="9" cy="16" r="1.600" fill="#8b4ec1"/><path d="M20 1l-8 17" stroke="#d99a51" stroke-width="2.500"/></svg></button>
    <button aria-label="Telegram"><svg viewBox="0 0 20 20"><circle cx="10" cy="10" r="10" fill="#2fa3dc"/><path d="M3.500 10L16 5l-2 10.500-4-3L8 15l-.500-3.500z" fill="#fff"/><path d="M7.500 11.500L14 7l-4 5.500z" fill="#b8d9ea"/></svg></button>
    <button class="open" aria-label="PowerPoint"><svg viewBox="0 0 22 20"><path d="M11 3h10v14H11z" fill="#fff" stroke="#d04423"/><path d="M14 6h5M14 12h5M14 14.500h5" stroke="#d04423"/><circle cx="16" cy="8.500" r="2" fill="#d04423"/><path d="M0 2l13-2v20L0 18z" fill="#d04423"/><path d="M4.500 15V5.500h3c3.500 0 3.500 5 0 5h-3" fill="none" stroke="#fff" stroke-width="1.800"/></svg></button>
    <button class="open current" aria-label="AutoCAD"><svg viewBox="0 0 22 22"><path d="M0 0h22v22H0z" fill="#0f7d75"/><path d="M1 1h20v20H1z" fill="none" stroke="#bfe6e1"/><path d="M2.500 17L7 3h1.500L13 17M4 12.500h7.500" fill="none" stroke="#fff" stroke-width="1.800"/><path d="M11 11h10M17 5v14M14 13.500h6v5h-6z" fill="none" stroke="#d5f1ed"/></svg></button>
    <button aria-label="Word"><svg viewBox="0 0 22 20"><path d="M10 3h11v14H10z" fill="#fff" stroke="#2b579a"/><path d="M13 6h6M13 8.500h6M13 11h6M13 13.500h6" stroke="#2b579a"/><path d="M0 2l13-2v20L0 18z" fill="#2b579a"/><path d="M3 6.500l1.500 7 2-6.500 2 6.500 1.500-7" fill="none" stroke="#fff" stroke-width="1.300"/></svg></button>
    <button class="open" aria-label="Chrome"><svg viewBox="0 0 20 20"><circle cx="10" cy="10" r="10" fill="#f9cf3a"/><path d="M10 10L1.340 5A10 10 0 0 1 18.660 5z" fill="#df4a3c"/><path d="M10 10L1.340 5A10 10 0 0 0 10 20l4.300-7.500z" fill="#3ea557"/><path d="M10 10V5h8.660A10 10 0 0 1 10 20l4-7z" fill="#f9cf3a"/><circle cx="10" cy="10" r="4.700" fill="#fff"/><circle cx="10" cy="10" r="3.600" fill="#4584ee"/></svg></button>
    <button class="open" aria-label="Camtasia"><svg viewBox="0 0 22 22"><rect width="22" height="22" rx="2" fill="#ee4b3c"/><path d="M17 5.500H9c-2.500 0-3 1-3 3v5c0 2 .5 3 3 3h8" fill="none" stroke="#fff" stroke-width="3.500"/></svg></button>
  </div>
  <div class="tray">
    <button aria-label="Show hidden icons"><svg viewBox="0 0 16 16"><path d="M3 10l5-5 5 5"/></svg></button>
    <button aria-label="Battery"><svg viewBox="0 0 16 16"><path d="M1.500 4.500h12v7h-12zM14.500 6.500v3"/><path d="M3 6h6v4H3z" fill="#eee" stroke="none"/></svg></button>
    <button aria-label="Network"><svg viewBox="0 0 16 16"><path d="M2 13C3 7 8 3 14 3M5 14c0-5 4-8 9-8M8 14c0-3 3-5 6-5"/><path d="M11 14c0-1 1-2 3-2v2z" fill="#eee"/></svg></button>
    <button aria-label="Volume"><svg viewBox="0 0 16 16"><path d="M1.500 6v4H4l3 3V3L4 6zM9 6c1 1 1 3 0 4M11 4c2 2 2 6 0 8M13 2c3 3 3 9 0 12"/></svg></button>
    <div class="stack lang"><span>ENG</span><span>IN</span></div>
    <div class="stack"><time>1:07 PM</time><span>20/04/22</span></div>
    <button class="action" aria-label="Notifications"><svg viewBox="0 0 18 18"><path d="M1 1h15v12h-4l-3 3v-3H1z" fill="#eee" stroke="none"/><path d="M4 4.500h9M4 7.500h9M4 10h5" stroke="#333"/></svg><span class="badge">40</span></button>
  </div>
</div>
</body>
</html>
```
FILE: styles.css
```css
* { box-sizing: border-box; }
body {
  margin: 0;
  min-height: 100vh;
  display: flex;
  flex-direction: column;
  background: #f0f0f0;
  color: #111;
  font-family: "Open Sans", "Noto Sans", sans-serif;
  font-size: 11px;
}
button, input, select { font: inherit; color: inherit; }
button {
  display: flex;
  align-items: center;
  justify-content: center;
  padding: 0;
  border: 0;
  background: none;
}
svg { display: block; flex: none; }
.defs { position: absolute; width: 0; height: 0; }

.titlebar {
  display: flex;
  align-items: center;
  height: 21px;
  padding-left: 3px;
  background: #fff;
}
.app-logo { width: 13px; height: 13px; }
.titlebar h1 { margin: 0 0 0 6px; font-size: 11px; font-weight: 400; }
.window-controls { display: flex; margin-left: auto; }
.window-controls button { width: 43px; height: 20px; }
.window-controls svg { width: 12px; height: 12px; fill: none; stroke: #111; }

.menubar {
  display: flex;
  align-items: center;
  gap: 12px;
  height: 19px;
  padding-left: 7px;
  background: #fff;
}
.doc-logo { width: 15px; height: 15px; margin-right: -6px; }
.doc-controls { display: flex; gap: 2px; margin-left: auto; }
.doc-controls button { width: 16px; height: 17px; border: 1px solid #e8e8e8; }
.doc-controls svg { width: 10px; height: 10px; fill: none; stroke: #6b7480; }

.docks { display: flex; flex-direction: column; }
.dock-row { display: flex; gap: 2px; }
.toolbar {
  display: flex;
  align-items: center;
  height: 27px;
  padding: 0 3px;
  border-right: 1px solid #a5a5a5;
  border-bottom: 1px solid #a5a5a5;
  border-top: 1px solid #fafafa;
}
.toolbar button { width: 22px; height: 22px; }
.toolbar button.drop { width: 12px; }
.toolbar svg { width: 16px; height: 16px; fill: none; stroke: #222; }
.toolbar .drop svg { width: 8px; height: 8px; }
.grip {
  width: 5px;
  height: 22px;
  margin-right: 3px;
  border: solid #a9a9a9;
  border-width: 0 1px;
  background: #fff;
}
.sep { width: 4px; height: 18px; border-left: 1px solid #8c8c8c; }
.combo + .sep { margin-left: 3px; }
.workspaces { width: 223px; }
.properties { margin-left: 364px; }
.properties .sep { width: 3px; }
.modeling { margin-left: 5px; }
.modeling .grip { margin-right: 0; }

.combo {
  position: relative;
  display: flex;
  align-items: center;
  height: 21px;
  border: 1px solid #7a7a7a;
  background: #fff;
  font-family: "Liberation Sans", sans-serif;
  font-size: 10px;
}
.combo select {
  flex: 1;
  min-width: 0;
  height: 100%;
  padding: 0 0 0 4px;
  border: 0;
  outline: 0;
  appearance: none;
  background: transparent;
}
.combo::after {
  content: "";
  position: absolute;
  right: 5px;
  top: 5px;
  width: 6px;
  height: 6px;
  border: solid #555;
  border-width: 0 1px 1px 0;
  transform: rotate(45deg);
  pointer-events: none;
}
.w92 { width: 93px; }
.w163 { width: 164px; }
.w163 select { padding-left: 8px; }
.w140 { width: 140px; }
.w149 { width: 149px; }
.w117 { width: 117px; }
.w112 { width: 112px; }
.off { border-color: #c4c4c4; background: #f0f0f0; }
.off select { padding-left: 8px; color: #808080; opacity: 1; }
.off::after { border-color: #aaa; }
.swatch { width: 10px; height: 10px; margin-left: 4px; border: 1px solid #111; }
.line { height: 1px; margin: 0 4px; background: #222; }
.w56 { width: 56px; }
.w33 { width: 33px; }

.workspace { flex: 1; display: flex; min-height: 0; }
.side {
  width: 26px;
  border-right: 2px solid #8a8a8a;
  flex: none;
}
.right { width: 24px; border-right: 0; }
.palette {
  display: grid;
  grid-auto-rows: 1fr;
  padding: 8px 3px 0 0;
  position: relative;
  border-bottom: 1px solid #a5a5a5;
}
.draw { height: 400px; }
.modify { height: 359px; padding: 8px 0 0 3px; }
.order { height: 99px; padding: 15px 0 0 3px; }
.palette button { width: 100%; min-height: 0; }
.palette svg { width: 15px; height: 15px; fill: none; stroke: #222; }
.hgrip {
  position: absolute;
  top: 3px;
  left: 3px;
  right: 3px;
  height: 5px;
  border: solid #a9a9a9;
  border-width: 1px 0;
  background: #fff;
}
.order .hgrip { top: 6px; }

.drawing { flex: 1; display: flex; flex-direction: column; min-width: 0; }
.canvas { flex: 1; width: 100%; min-height: 0; background: #000; }
.geo { fill: none; stroke: #fff; stroke-width: 1; }
.arrows { fill: #fff; }
.dims { fill: #ddd; font: 14px "Liberation Sans", sans-serif; text-anchor: middle; }
.notes { fill: #ddd; font: 11px "DejaVu Sans Mono", monospace; }
.notes .large { font-size: 14px; }

.tabs {
  display: flex;
  align-items: stretch;
  height: 14px;
  font-family: "Liberation Sans", sans-serif;
  font-size: 10px;
}
.tab-nav { display: flex; margin-right: 3px; }
.tab-nav button { width: 17px; border-right: 1px solid #bbb; background: #fff; }
.tab-nav svg { width: 10px; height: 10px; fill: #000; }
.tab {
  position: relative;
  z-index: 0;
  padding: 0 7px 0 4px;
  line-height: 13px;
  border-bottom: 1px solid #222;
}
.tab::after {
  content: "";
  position: absolute;
  top: 0;
  right: 2px;
  width: 2px;
  height: 14px;
  background: #111;
  transform: rotate(18deg);
}
.tab.active { padding-left: 7px; border-bottom: 0; color: #fff; font-weight: 700; }
.active::before {
  content: "";
  position: absolute;
  inset: 0 1px 0 0;
  z-index: -1;
  background: #000;
  clip-path: polygon(0 0, 100% 0, calc(100% - 4px) 100%, 4px 100%);
}

.command {
  display: flex;
  margin-top: 6px;
  padding: 8px 4px 1px 5px;
  border-top: 2px solid #858585;
  border-bottom: 1px solid #999;
}
.command .grip { height: 38px; }
.console {
  flex: 1;
  border: solid #7f7f7f;
  border-width: 2px 0 0 2px;
  background: #fff;
  font-family: "Liberation Mono", monospace;
  font-size: 12px;
}
.history { display: flex; height: 22px; border-bottom: 1px solid #999; }
.history p { flex: 1; margin: 0 0 0 2px; line-height: 16px; }
.vscroll { width: 17px; background: #f0f0f0; }
.vscroll button { width: 17px; height: 10px; }
.vscroll svg { width: 10px; height: 8px; }
.vscroll svg, .hscroll svg { fill: none; stroke: #444; stroke-width: 2; }
.prompt { display: flex; align-items: center; height: 17px; padding-left: 2px; }
.prompt input { flex: 1; min-width: 0; height: 16px; padding: 0; border: 0; outline: 0; background: none; }
.hscroll { display: flex; width: 82px; height: 17px; padding-right: 17px; background: #f0f0f0; justify-content: space-between; }
.hscroll button { width: 17px; }
.hscroll svg { width: 8px; height: 10px; }
.thumb { width: 16px; margin-right: 14px; background: #cdcdcd; }

.status {
  display: flex;
  align-items: center;
  gap: 3px;
  height: 22px;
  padding: 0 1px 0 5px;
  font-family: "Liberation Sans", sans-serif;
  font-size: 10px;
}
.coords {
  width: 154px;
  height: 17px;
  line-height: 16px;
  white-space: nowrap;
  border: 1px solid #aaa;
  border-right-color: #ccc;
}
.status button { height: 18px; padding: 0 2px; border: solid #c0c0c0; border-width: 0 1px 1px 0; }
.status button.on { border: solid #222; border-width: 1px 0 0 1px; background: #f8f8f8; }
.status button.plain { border: 0; }
.status-tray { display: flex; align-items: center; gap: 4px; margin-left: auto; }
.notify { display: flex; border: solid #999; border-width: 1px 0 0 1px; }
.notify svg { width: 17px; height: 16px; }
.plain svg { width: 10px; height: 10px; }
.plain:last-child svg { width: 16px; height: 16px; }

.taskbar {
  display: flex;
  flex: none;
  height: 37px;
  color: #f2f2f2;
  background: linear-gradient(90deg, #20303a 0, #25353f 45%, #2b2d30 65%, #2a2c2e 78%, #1b2b34 90%);
}
.start { width: 46px; }
.start svg { width: 15px; height: 15px; }
.search {
  display: flex;
  align-items: center;
  gap: 9px;
  width: 322px;
  padding-left: 10px;
  background: #f2f2f2;
  color: #333;
}
.search svg { width: 18px; height: 18px; fill: none; stroke: #222; stroke-width: 1.300; }
.search input { flex: 1; min-width: 0; padding: 0; border: 0; outline: 0; background: none; font-size: 13px; }
.search input::placeholder { color: #444; opacity: 1; }
.apps { display: flex; }
.apps button { position: relative; width: 46px; }
.apps svg { width: 21px; height: 21px; }
.apps .open::after {
  content: "";
  position: absolute;
  inset: auto 4px 0;
  height: 2px;
  background: #76b9ed;
}
.apps .current { background: #566269; }
.apps .current::after { inset: auto 0 0; }
.tray { display: flex; align-items: center; margin-left: auto; }
.tray button { width: 22px; height: 37px; }
.tray svg { width: 17px; height: 17px; fill: none; stroke: #eee; stroke-width: 1.200; }
.stack {
  display: flex;
  flex-direction: column;
  align-items: center;
  width: 54px;
  line-height: 16px;
  font-size: 11px;
}
.lang { width: 36px; }
.tray .action { position: relative; width: 50px; }
.badge {
  position: absolute;
  right: 13px;
  bottom: 3px;
  width: 18px;
  height: 18px;
  border: 1px solid #bbb;
  border-radius: 50%;
  background: #3a4349;
  font-size: 10px;
  font-weight: 600;
  line-height: 15px;
}
```
